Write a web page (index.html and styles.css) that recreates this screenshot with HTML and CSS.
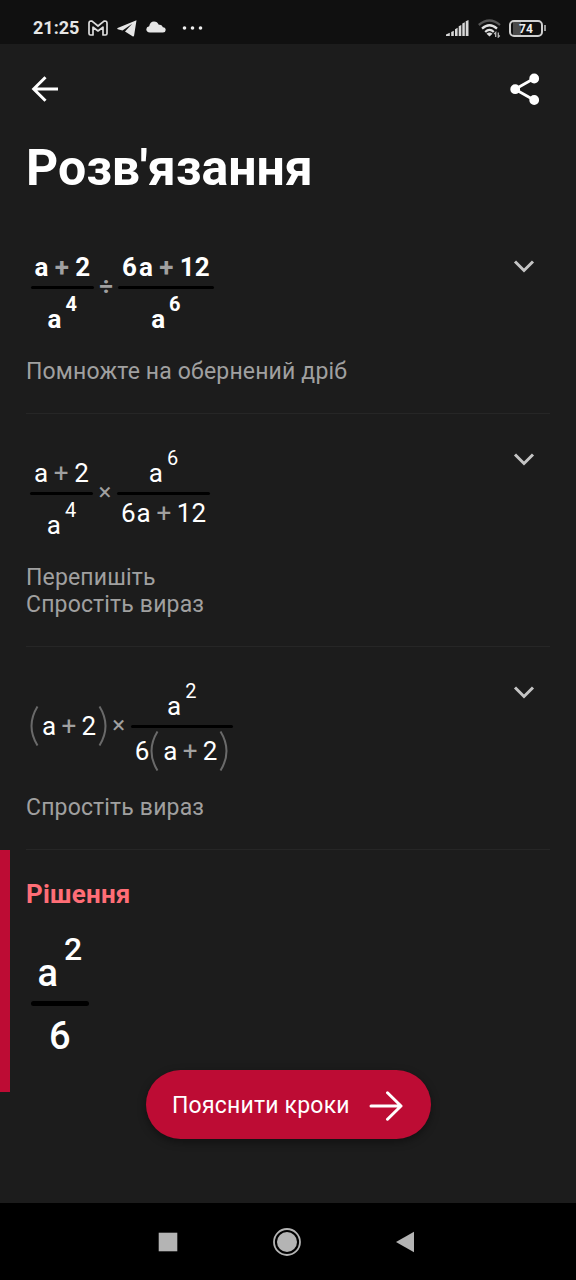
FILE: index.html
```html
<!DOCTYPE html>
<html lang="uk">
<head>
    <meta charset="UTF-8">
    <meta name="viewport" content="width=device-width, initial-scale=1.0">
    <title>Розв'язання</title>
    <link rel="stylesheet" href="styles.css">
</head>
<body>
    <div class="status-bar">
        <div class="status-left">
            <span class="clock">21:25</span>
            <svg class="icon-mail" width="20" height="16" viewBox="0 0 20 16" fill="none" stroke="#dcdcdc" stroke-width="1.7" stroke-linejoin="round">
                <path d="M1 3.2 Q1 1 3 1 L4 1.2 L10 6 L16 1.2 L17 1 Q19 1 19 3.2 V13.5 Q19 15 17.5 15 H15 V7.2 L10 11 L5 7.2 V15 H2.5 Q1 15 1 13.5 Z"/>
            </svg>
            <svg class="icon-plane" width="20" height="17" viewBox="0 0 20 17" fill="#e6e6e6">
                <path d="M19.5 .3 L.6 7.9 Q-.2 8.5 .7 9.2 L5.5 10.6 L15.2 3.8 L8 11.4 L15.5 16.3 Q16.7 17 17.1 15.6 Z"/>
            </svg>
            <svg class="icon-cloud" width="20" height="12" viewBox="0 0 20 12" fill="#e6e6e6">
                <path d="M4 11.5 Q.3 11.2 .3 8.3 Q.4 5.8 3.2 5.2 Q4 .5 8 .4 Q11.4 .4 12.8 3.8 Q16 3 16.9 6.3 Q19.7 6.600 19.7 9 Q19.5 11.5 17 11.5 Z"/>
            </svg>
            <svg class="icon-more" width="22" height="4" viewBox="0 0 22 4" fill="#efefef">
                <circle cx="2.5" cy="2" r="1.8"/>
                <circle cx="10.5" cy="2" r="1.8"/>
                <circle cx="18.5" cy="2" r="1.8"/>
            </svg>
        </div>
        <div class="status-right">
            <svg width="23" height="17" viewBox="0 0 23 17" fill="#d8d8d8">
                <path d="M0 16 V14.5 L3.8 12.8 V16 Z M5.2 16 V12 L7.8 10.7 V16 Z M9 16 V9.3 L11.6 7.8 V16 Z M12.7 16 V6.3 L15.3 4.9 V16 Z M16.3 16 V3.5 L18.8 2.3 V16 Z M19.7 16 V1.2 L22.5 0 V16 Z"/>
            </svg>
            <svg class="icon-wifi" width="23" height="19" viewBox="0 0 23 19" fill="none" stroke-width="2.300">
                <path stroke="#555" d="M.8 6 Q11.5 -3 22 6"/>
                <path stroke="#e0e0e0" d="M4 9.6 Q11.5 2.8 19 9.6"/>
                <path stroke="#e0e0e0" d="M7.2 13 Q11.5 8.8 15.8 13"/>
                <path fill="#e0e0e0" d="M8.5 14.7 Q11.5 12.5 14.5 14.7 L11.5 17.5 Z"/>
                <path stroke="#bbb" stroke-width="1.3" d="M17.7 18 V13.5 L16.2 15 M20.3 13.5 V18 L21.8 16.5"/>
            </svg>
            <div class="battery">
                <div class="battery-body">74</div>
                <div class="battery-tip"></div>
            </div>
        </div>
    </div>

    <div class="app-bar">
        <svg width="28" height="28" viewBox="0 0 28 28" fill="none" stroke="#fff" stroke-width="3">
            <path d="M27 14 H3 M14.5 2.2 L2.7 14 L14.5 25.8"/>
        </svg>
        <svg width="30" height="33" viewBox="0 0 30 33" fill="#fff" stroke="#fff" stroke-width="2.8">
            <path d="M24 5.5 L5 16.2 L24 27" fill="none"/>
            <circle cx="24.2" cy="5.5" r="3.5"/>
            <circle cx="5.2" cy="16.2" r="3.5"/>
            <circle cx="24.2" cy="27" r="3.5"/>
        </svg>
    </div>

    <main>
        <h1>Розв'язання</h1>

        <div class="step first">
            <div class="step-body">
                <div class="expr bold">
                    <div class="frac">
                        <div class="num"><span>a</span><span class="op">+</span><span>2</span></div>
                        <div class="line"></div>
                        <div class="den pow"><span>a</span><sup>4</sup></div>
                    </div>
                    <span class="main-op">÷</span>
                    <div class="frac">
                        <div class="num"><span>6</span><span class="var">a</span><span class="op">+</span><span>12</span></div>
                        <div class="line"></div>
                        <div class="den pow"><span>a</span><sup>6</sup></div>
                    </div>
                </div>
                <p>Помножте на обернений дріб</p>
            </div>
            <svg class="chevron" width="22" height="14" viewBox="0 0 22 14"><path d="M2 2.5 L11 11.5 L20 2.5"/></svg>
        </div>

        <div class="step">
            <div class="step-body">
                <div class="expr">
                    <div class="frac">
                        <div class="num"><span>a</span><span class="op">+</span><span>2</span></div>
                        <div class="line"></div>
                        <div class="den pow"><span>a</span><sup>4</sup></div>
                    </div>
                    <span class="main-op">×</span>
                    <div class="frac">
                        <div class="num pow"><span>a</span><sup>6</sup></div>
                        <div class="line"></div>
                        <div class="den"><span>6</span><span class="var">a</span><span class="op">+</span><span>12</span></div>
                    </div>
                </div>
                <p>Перепишіть<br>Спростіть вираз</p>
            </div>
            <svg class="chevron" width="22" height="14" viewBox="0 0 22 14"><path d="M2 2.5 L11 11.5 L20 2.5"/></svg>
        </div>

        <div class="step third">
            <div class="step-body">
                <div class="expr">
                    <div class="group">
                        <svg class="paren" width="9" height="40" viewBox="0 0 9 40"><path d="M7.5 .5 Q-4.5 20 7.5 39.5"/></svg>
                        <span>a</span><span class="op">+</span><span>2</span>
                        <svg class="paren" width="9" height="40" viewBox="0 0 9 40"><path d="M1.5 .5 Q13.5 20 1.5 39.5"/></svg>
                    </div>
                    <span class="main-op">×</span>
                    <div class="frac">
                        <div class="num pow"><span>a</span><sup>2</sup></div>
                        <div class="line"></div>
                        <div class="den group">
                            <span class="factor">6</span>
                            <svg class="paren" width="9" height="40" viewBox="0 0 9 40"><path d="M7.5 .5 Q-4.5 20 7.5 39.5"/></svg>
                            <span>a</span><span class="op">+</span><span>2</span>
                            <svg class="paren" width="9" height="40" viewBox="0 0 9 40"><path d="M1.5 .5 Q13.5 20 1.5 39.5"/></svg>
                        </div>
                    </div>
                </div>
                <p>Спростіть вираз</p>
            </div>
            <svg class="chevron" width="22" height="14" viewBox="0 0 22 14"><path d="M2 2.5 L11 11.5 L20 2.5"/></svg>
        </div>

        <div class="solution">
            <h2>Рішення</h2>
            <div class="expr large">
                <div class="frac">
                    <div class="num pow"><span>a</span><sup>2</sup></div>
                    <div class="line"></div>
                    <div class="den"><span>6</span></div>
                </div>
            </div>
        </div>
    </main>

    <button class="explain">
        <span>Пояснити кроки</span>
        <svg width="34" height="30" viewBox="0 0 34 30" fill="none" stroke="#fff" stroke-width="3" stroke-linecap="round" stroke-linejoin="round">
            <path d="M2 15 H32 M18.5 1.8 L32 15 L18.5 28.2"/>
        </svg>
    </button>

    <div class="nav-bar">
        <svg width="20" height="20" viewBox="0 0 20 20" fill="#b4b4b4"><rect x=".7" y=".7" width="18.6" height="18.6"/></svg>
        <svg width="28" height="28" viewBox="0 0 28 28" fill="#b4b4b4">
            <circle cx="14" cy="14" r="13" fill="none" stroke="#b4b4b4" stroke-width="1.8"/>
            <circle cx="14" cy="14" r="10"/>
        </svg>
        <svg width="20" height="22" viewBox="0 0 20 22" fill="#b4b4b4"><path d="M1 11 L19 .8 V21.2 Z"/></svg>
    </div>
</body>
</html>
```

FILE: styles.css
```css
* {
    box-sizing: border-box;
}
body {
    position: relative;
    display: flex;
    flex-direction: column;
    width: 576px;
    height: 1280px;
    margin: 0;
    overflow: hidden;
    background: #1c1c1c;
    color: #fff;
    font-family: Roboto, sans-serif;
}
svg {
    display: block;
    flex: none;
}

/* status bar */
.status-bar {
    display: flex;
    justify-content: space-between;
    align-items: center;
    height: 44px;
    padding: 12px 30px 0 33px;
    background: #101010;
}
.status-left,
.status-right {
    display: flex;
    align-items: center;
}
.clock {
    width: 55px;
    color: #e6e6e6;
    font-size: 18px;
    font-weight: 700;
    line-height: 22px;
}
.icon-mail {
    margin-bottom: 1px;
}
.icon-plane {
    margin-left: 9px;
}
.icon-cloud {
    margin: 0 0 2px 9px;
}
.icon-more {
    margin: 0 0 1px 16px;
}
.icon-wifi {
    margin-left: 9px;
}
.battery {
    display: flex;
    align-items: center;
    margin-left: 8px;
}
.battery-body {
    width: 34px;
    height: 17px;
    border: 2px solid #d0d0d0;
    border-radius: 5px;
    background: linear-gradient(90deg, #101010 2px, #4a4a4a 2px, #4a4a4a 10px, #101010 10px);
    color: #eee;
    font-size: 12px;
    font-weight: 700;
    line-height: 14px;
    text-align: center;
}
.battery-tip {
    width: 2px;
    height: 6px;
    margin-left: 1px;
    background: #999;
}

/* header */
.app-bar {
    display: flex;
    justify-content: space-between;
    align-items: center;
    height: 90px;
    padding: 0 36px 0 31px;
}
main {
    flex: 1;
}
h1 {
    height: 86px;
    margin: 0;
    padding: 5px 26px 0;
    font-size: 50px;
    font-weight: 700;
    line-height: 58px;
}

/* steps */
.step {
    display: flex;
    justify-content: space-between;
    align-items: flex-start;
    margin: 0 26px;
    padding: 32px 0 28px;
    border-bottom: 1px solid #262626;
}
.step p {
    margin: 24px 0 0;
    color: #a0a0a0;
    font-size: 23px;
    letter-spacing: 0.16px;
    line-height: 27px;
}
.chevron {
    margin: 6px 15px 0 0;
    fill: none;
    stroke: #c4c4c4;
    stroke-width: 3;
}
.first .chevron {
    margin-top: 7px;
}

/* math */
.expr {
    display: flex;
    align-items: flex-start;
    padding-left: 4px;
    font-size: 26px;
    line-height: 30px;
}
.bold {
    padding-left: 4.5px;
    font-weight: 700;
}
.frac {
    display: grid;
    grid-template-rows: 42px 3px auto;
    row-gap: 4px;
}
.first .frac {
    grid-template-rows: 30px 3px auto;
}
.num,
.den {
    display: flex;
    justify-content: center;
    align-self: end;
    padding: 0 4px;
}
.den {
    margin-top: -1px;
}
.line {
    border-radius: 2px;
    background: #000;
}
.pow {
    align-items: flex-start;
}
.pow span {
    margin-top: 12px;
}
sup {
    margin-left: 4px;
    font-size: 20px;
    line-height: 24px;
    vertical-align: baseline;
}
.var {
    margin-left: 1px;
}
.bold .var {
    margin-left: 2px;
}
.op {
    margin: 0 5.7px;
    color: #a0a0a0;
}
.bold .op {
    margin: 0 6.3px;
}
.main-op {
    width: 24px;
    margin-top: 34px;
    color: #a0a0a0;
    font-size: 24px;
    line-height: 24px;
    text-align: center;
}
.first .main-op {
    margin-top: 23px;
}
.group {
    display: flex;
    align-items: center;
    height: 39px;
}
.expr > .group {
    margin-top: 27px;
}
.third .op {
    margin: 0 5.3px;
}
.third .den {
    padding-right: 5px;
}
.paren {
    margin: 0 3px 0 0;
    fill: none;
    stroke: #6a6a6a;
    stroke-width: 2;
}
span + .paren {
    margin: 0 0 0 1.5px;
}
.factor + .paren {
    margin: 0 4px 0 1px;
}

/* solution */
.solution {
    height: 242px;
    padding: 29px 0 0 16px;
    border-left: 10px solid #bd0c34;
}
h2 {
    margin: 0;
    color: #ff6e76;
    font-size: 26px;
    font-weight: 700;
    letter-spacing: 0.2px;
    line-height: 30px;
}
.large {
    margin-top: 21px;
    padding-left: 4.5px;
    font-size: 38px;
    font-weight: 500;
    line-height: 44px;
}
.large .frac {
    grid-template-rows: 65px 5px auto;
    row-gap: 6px;
}
.large .num,
.large .den {
    padding: 0 7px;
}
.large .den {
    margin-top: 2px;
}
.large .line {
    border-radius: 3px;
}
.large .pow span {
    margin-top: 21px;
}
.large sup {
    margin-left: 6px;
    font-size: 32px;
    line-height: 38px;
}

/* floating button */
.explain {
    position: absolute;
    left: 146px;
    bottom: 141px;
    display: flex;
    align-items: center;
    justify-content: space-between;
    width: 285px;
    height: 69px;
    padding: 2px 28px 0 26px;
    border: 0;
    border-radius: 35px;
    background: #bd0c34;
    box-shadow: 0 3px 8px rgba(0, 0, 0, 0.4);
    color: #fff;
    font-family: inherit;
    font-size: 23px;
    letter-spacing: 0.2px;
}

/* navigation bar */
.nav-bar {
    display: flex;
    justify-content: space-between;
    align-items: center;
    height: 77px;
    padding: 0 161px 0 158px;
    background: #000;
}
```
